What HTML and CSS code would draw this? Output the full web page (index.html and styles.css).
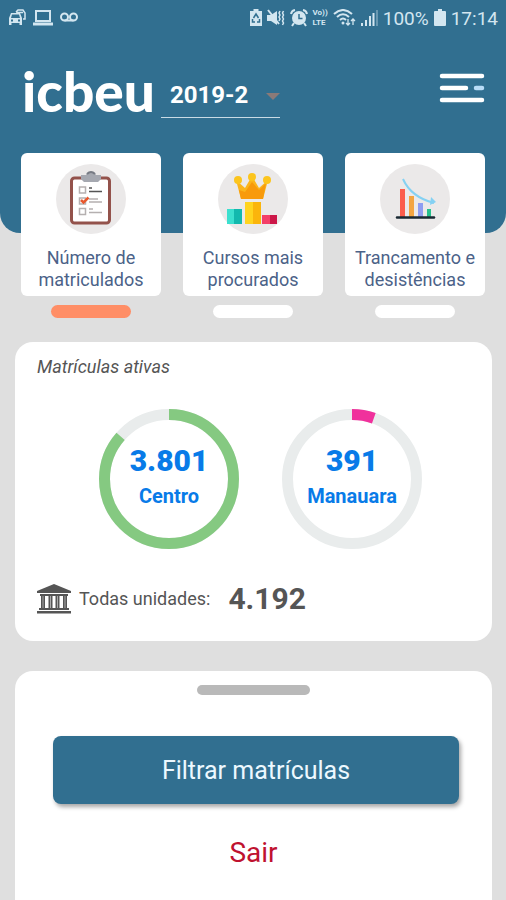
FILE: index.html
```html
<!DOCTYPE html>
<html lang="pt-BR">
<head>
<meta charset="utf-8">
<meta name="viewport" content="width=device-width, initial-scale=1">
<title>icbeu</title>
<link rel="stylesheet" href="styles.css">
</head>
<body>
<header class="header">
  <div class="status">
    <div class="status-group">
      <svg width="18" height="18" viewBox="0 0 18 18" fill="none" stroke="currentColor" stroke-width="1.5"><path d="M8 3 10 1h5l2 3v6h-2M8 3.500h7"/><path fill="currentColor" stroke="none" fill-rule="evenodd" d="M3 4h9l2 5v7h-2.500v-2h-8v2H1V9zM4 5.500 3 9h9l-1-3.500zM3 10.500v2h2v-2zm7 0v2h2v-2z"/></svg>
      <svg width="20" height="18" viewBox="0 0 20 18" fill="none" stroke="currentColor"><rect x="3" y="2" width="14" height="10" stroke-width="2"/><path d="M0 15h20" stroke-width="3"/></svg>
      <svg width="18" height="18" viewBox="0 0 18 18" fill="none" stroke="currentColor" stroke-width="2"><circle cx="4.500" cy="8" r="3.500"/><circle cx="13.500" cy="8" r="3.500"/><path d="M4.500 11.500h9"/></svg>
    </div>
    <div class="status-group status-right">
      <svg width="12" height="18" viewBox="0 0 12 18"><path fill="currentColor" d="M3.500 2V0h5v2H12v15H0V2z"/><path d="m3.500 9 2.500-4 2.500 4M2.500 10v3H5m4.500-3v3H7" fill="none" stroke="#316f90" stroke-width="1.500"/></svg>
      <svg width="18" height="18" viewBox="0 0 18 18" fill="none" stroke="currentColor" stroke-width="1.500"><path fill="currentColor" stroke="none" d="M0 6h4l6-4v14l-6-4H0z"/><path d="M1 1l11 14" stroke-width="2"/><path d="m13 2-1 2 1 2-1 2 1 2-1 2M16.500 2l-1 2 1 2-1 2 1 2-1 2 1 2-1 2"/></svg>
      <svg width="18" height="18" viewBox="0 0 18 18" fill="none" stroke="currentColor" stroke-width="2"><circle cx="9" cy="9" r="7" fill="currentColor" stroke="none"/><path d="M1 5a5 5 0 0 1 4-4M17 5a5 5 0 0 0-4-4M4 14l-2 3M14 14l2 3"/><path d="M9 5v4.500h3.500" stroke="#316f90" stroke-width="1.500"/></svg>
      <span class="volte"><span>Vo))</span><span>LTE</span></span>
      <svg width="23" height="18" viewBox="0 0 23 18" fill="none" stroke="currentColor" stroke-width="2"><path d="M1 5Q10-3 19 5M4 8Q10 2.500 16 8M7 11q3-3 6 0"/><circle cx="10" cy="14" r="1.500" fill="currentColor" stroke="none"/><path d="M15 10v6m-2-2 2 2 2-2M20 16v-6m-2 2 2-2 2 2" stroke-width="1.300"/></svg>
      <svg width="17" height="18" viewBox="0 0 17 18" stroke="currentColor" stroke-width="2"><path d="M1 14v3M5 11v6M9 7v10M12.500 4v13"/><path d="M16 1v16" opacity=".35"/></svg>
      <span>100%</span>
      <svg width="12" height="18" viewBox="0 0 12 18" fill="currentColor"><path d="M4 0h4v2h3q1 0 1 1v13q0 1-1 1H1q-1 0-1-1V3q0-1 1-1h3z"/></svg>
      <span>17:14</span>
    </div>
  </div>
  <div class="topbar">
    <div class="logo">icbeu</div>
    <div class="period">
      <select aria-label="Período"><option>2019-2</option></select>
    </div>
    <button class="menu" type="button" aria-label="Menu">
      <svg width="46" height="32" viewBox="0 0 46 32" stroke="#fff" stroke-width="4.500" stroke-linecap="round"><path d="M3 4h40M3 16h24M3 28h40"/><path d="M37 16h6" stroke="#b9dcf7"/></svg>
    </button>
  </div>
</header>

<nav class="tabs">
  <button class="tab active" type="button">
    <span class="tab-card">
      <svg class="tab-icon" viewBox="0 0 70 70"><circle cx="35" cy="35" r="35" fill="#ebe9e9"/><rect x="15.500" y="14" width="38" height="45" rx="3" fill="#fff" stroke="#93524b" stroke-width="3"/><path d="M25 11h5q1-3 5-3t5 3h5v4l-3 3H28l-3-3z" fill="#a5a8b0"/><path d="M31 10q4-4 8 0" fill="none" stroke="#777b84" stroke-width="2"/><g fill="none" stroke="#b5b0b0" stroke-width="1.500"><path d="M23.500 23h6v6h-6zM23.500 34h6v6h-6zM23.500 44.500h6v6h-6z"/><path d="M33 35h9M33 38h13M33 45h4M33 48.500h13"/></g><path d="M33 24h3M33 27.500h13" stroke="#555" stroke-width="1.500"/><path d="m25 36 2.500 2.500 5-5" fill="none" stroke="#e8582d" stroke-width="2.500"/></svg>
      <span>Número de matriculados</span>
    </span>
    <span class="tab-mark"></span>
  </button>
  <button class="tab" type="button">
    <span class="tab-card">
      <svg class="tab-icon" viewBox="0 0 70 70"><circle cx="35" cy="35" r="35" fill="#ebe9e9"/><path d="M18 16l9 8 7-12 7 12 9-8-5 19H23z" fill="#fbb51c"/><path d="M34 18l7 8 7-7-3 16H23l-2-9 6 2z" fill="#f89a0c"/><g fill="#fcc51d"><circle cx="20" cy="16" r="4"/><circle cx="34" cy="13" r="4"/><circle cx="49" cy="16" r="4"/></g><path d="M27 38h16v22H27z" fill="#ffd41f"/><path d="M35 38h8v22h-8z" fill="#fbb50c"/><path d="M9 45h15v15H9z" fill="#3ce0cf"/><path d="M16 45h8v15h-8z" fill="#13b9ae"/><path d="M44 51h15v9H44z" fill="#f33f68"/><path d="M52 51h7v9h-7z" fill="#cc1748"/></svg>
      <span>Cursos mais procurados</span>
    </span>
    <span class="tab-mark"></span>
  </button>
  <button class="tab" type="button">
    <span class="tab-card">
      <svg class="tab-icon" viewBox="0 0 70 70"><circle cx="35" cy="35" r="35" fill="#ebe9e9"/><path d="M20 25h5v28h-5z" fill="#fb5d4c"/><path d="M29 32h5v21h-5z" fill="#f3a541"/><path d="M38 39h5v14h-5z" fill="#8e9df2"/><path d="M47 45h4v8h-4z" fill="#25c08e"/><path d="M17 53.500h37" stroke="#192832" stroke-width="2.500" stroke-linecap="round"/><path d="M23 15q8 18 31 24" fill="none" stroke="#84d1f3" stroke-width="2"/><path d="m51 33 5 5-6 3z" fill="#84d1f3"/></svg>
      <span>Trancamento e desistências</span>
    </span>
    <span class="tab-mark"></span>
  </button>
</nav>

<main class="summary">
  <h1>Matrículas ativas</h1>
  <div class="rings">
    <div class="ring">
      <svg viewBox="0 0 140 140"><circle class="track" cx="70" cy="70" r="64.500"/><circle class="arc green" cx="70" cy="70" r="64.500" pathLength="100" stroke-dasharray="86.500 100"/></svg>
      <div class="ring-text"><strong>3.801</strong><span>Centro</span></div>
    </div>
    <div class="ring">
      <svg viewBox="0 0 140 140"><circle class="track" cx="70" cy="70" r="64.500"/><circle class="arc pink" cx="70" cy="70" r="64.500" pathLength="100" stroke-dasharray="5.500 100"/></svg>
      <div class="ring-text"><strong>391</strong><span>Manauara</span></div>
    </div>
  </div>
  <div class="total">
    <svg width="34" height="30" viewBox="0 0 34 30" fill="#555"><path d="M17 0 34 7v2H0V7zM3 10h28v2H3zM2 24h30v2H2zM0 27h34v2.500H0z"/><path d="M4 11h4v14H4zM11.500 11h4v14h-4zM18.500 11h4v14h-4zM26 11h4v14h-4z"/><path d="M5.500 12h1v12h-1zM13 12h1v12h-1zM20 12h1v12h-1zM27.500 12h1v12h-1z" fill="#aaa"/></svg>
    <span>Todas unidades:</span>
    <strong>4.192</strong>
  </div>
</main>

<section class="sheet">
  <div class="handle"></div>
  <button class="filter" type="button">Filtrar matrículas</button>
  <button class="exit" type="button">Sair</button>
</section>
</body>
</html>
```
FILE: styles.css
```css
* { box-sizing: border-box; }

body {
  margin: 0;
  min-height: 100vh;
  display: flex;
  flex-direction: column;
  background: #dfdfdf;
  color: #555;
  font-family: Roboto, "Liberation Sans", sans-serif;
}

button, select {
  border: 0;
  padding: 0;
  background: none;
  color: inherit;
  font: inherit;
}

svg { display: block; flex: none; }

.header {
  background: #316f90;
  border-radius: 0 0 20px 20px;
  padding-bottom: 112px;
}

.status {
  display: flex;
  justify-content: space-between;
  align-items: center;
  height: 36px;
  padding: 0 8px;
  color: #d3e6f0;
  font-size: 19px;
}

.status-group { display: flex; align-items: center; gap: 7px; }
.status-right { gap: 5px; }

.volte {
  display: grid;
  font-size: 8px;
  line-height: 10px;
  font-weight: 700;
}

.topbar {
  display: flex;
  align-items: center;
  height: 85px;
  padding: 34px 21px 0 22px;
  color: #fff;
}

.logo {
  margin-bottom: 10px;
  font-family: Lato, sans-serif;
  font-size: 55px;
  font-weight: 900;
  line-height: 56px;
}

.period {
  position: relative;
  width: 119px;
  margin-left: 6px;
  border-bottom: 1px solid #c9dbe5;
}

.period::after {
  content: "";
  position: absolute;
  right: 0;
  top: 20px;
  border: 7px solid transparent;
  border-top-color: #8a7a78;
  border-bottom: 0;
  pointer-events: none;
}

.period select {
  display: block;
  appearance: none;
  width: 100%;
  height: 44px;
  padding-left: 9px;
  font-size: 24px;
  font-weight: 700;
}

.menu { margin: 0 0 16px auto; }

.tabs {
  display: grid;
  grid-template-columns: repeat(3, 1fr);
  gap: 22px;
  padding: 0 21px;
  margin-top: -80px;
}

.tab {
  display: flex;
  flex-direction: column;
  align-items: center;
  gap: 9px;
  min-width: 0;
}

.tab-card {
  display: flex;
  flex-direction: column;
  align-items: center;
  gap: 13px;
  width: 100%;
  padding: 11px 6px 5px;
  border-radius: 6px;
  background: #fff;
  color: #4b6288;
  font-size: 18px;
  line-height: 22px;
}

.tab-icon { width: 70px; height: 70px; }

.tab-mark {
  width: 80px;
  height: 13px;
  border-radius: 7px;
  background: #fff;
}

.active .tab-mark { background: #ff8e66; }

.summary {
  margin: 24px 14px 0 15px;
  padding: 14px 22px 27px;
  border-radius: 18px;
  background: #fff;
}

h1 {
  margin: 0;
  font-size: 18px;
  line-height: 22px;
  font-weight: 400;
  font-style: italic;
}

.rings {
  display: flex;
  justify-content: center;
  gap: 43px;
  margin: 31px 0 34px;
  padding-left: 14px;
}

.ring { display: grid; width: 140px; height: 140px; }
.ring > * { grid-area: 1 / 1; }
.ring circle { fill: none; stroke-width: 11; }
.track { stroke: #e9ecec; }
.arc { transform: rotate(-90deg); transform-origin: center; }
.ring .green { stroke: #85c981; }
.ring .pink { stroke: #f0319c; }

.ring-text {
  display: flex;
  flex-direction: column;
  align-items: center;
  padding-top: 34px;
  color: #087be8;
  font-size: 20px;
  line-height: 34px;
  font-weight: 700;
}

.ring-text strong { font-size: 30px; line-height: 36px; }

.total { display: flex; align-items: center; gap: 8px; font-size: 18px; }
.total strong { margin-left: 10px; font-size: 30px; line-height: 31px; }

.sheet {
  flex: 1;
  display: flex;
  flex-direction: column;
  align-items: center;
  margin: 30px 14px 0 15px;
  padding: 14px 33px 20px;
  border-radius: 18px 18px 0 0;
  background: #fff;
}

.handle { width: 113px; height: 10px; border-radius: 5px; background: #b9b9b9; }

.filter {
  align-self: stretch;
  height: 68px;
  margin: 41px 0 0 5px;
  border-radius: 8px;
  background: #316f90;
  box-shadow: 2px 3px 4px rgba(0, 0, 0, .35);
  color: #ecf8ff;
  font-size: 25px;
}

.exit {
  margin-top: 32px;
  color: #bf1230;
  font-size: 28px;
  line-height: 34px;
}
```
